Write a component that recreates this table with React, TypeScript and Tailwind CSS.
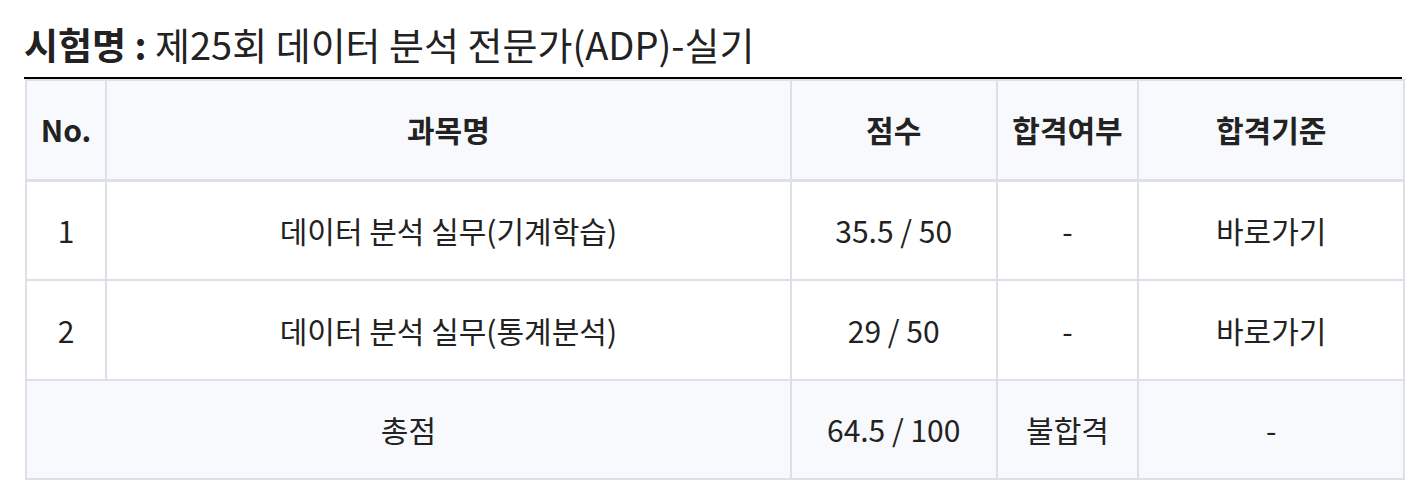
import React from 'react';

const rows = [
  { no: '1', name: '데이터 분석 실무(기계학습)', score: '35.5 / 50', pass: '-', link: '바로가기' },
  { no: '2', name: '데이터 분석 실무(통계분석)', score: '29 / 50', pass: '-', link: '바로가기' },
];

const ExamResult: React.FC = () => {
  return (
    <div className="min-h-screen bg-white pl-[24px] pr-[20px] pt-[19px] text-[#222]" style={{ fontFamily: '"Noto Sans CJK KR", "Noto Sans", sans-serif' }}>
      <h2 className="text-[38px] leading-[50px] pb-[8px] border-b-2 border-black">
        <span className="font-bold text-[37px]">시험명 :</span> 제25회 데이터 분석 전문가(ADP)-실기
      </h2>
      <table className="w-[1380px] border-collapse text-center text-[30px] ml-[1px]">
        <colgroup>
          <col className="w-[80px]" />
          <col className="w-[686px]" />
          <col className="w-[206px]" />
          <col className="w-[142px]" />
          <col className="w-[266px]" />
        </colgroup>
        <thead>
          <tr className="bg-[#f8f9fd] h-[100px] border-b-[3px] border-[#dde1e7]">
            <th className="border-2 border-[#dde1e7] font-bold">No.</th>
            <th className="border-2 border-[#dde1e7] font-bold">과목명</th>
            <th className="border-2 border-[#dde1e7] font-bold">점수</th>
            <th className="border-2 border-[#dde1e7] font-bold">합격여부</th>
            <th className="border-2 border-[#dde1e7] font-bold">합격기준</th>
          </tr>
        </thead>
        <tbody>
          {rows.map((r) => (
            <tr key={r.no} className="h-[100px]">
              <td className="border-2 border-[#dde1e7]">{r.no}</td>
              <td className="border-2 border-[#dde1e7]">{r.name}</td>
              <td className="border-2 border-[#dde1e7]">{r.score}</td>
              <td className="border-2 border-[#dde1e7]">{r.pass}</td>
              <td className="border-2 border-[#dde1e7]">{r.link}</td>
            </tr>
          ))}
          <tr className="h-[99px] bg-[#f8f9fd]">
            <td colSpan={2} className="border-2 border-[#dde1e7]">총점</td>
            <td className="border-2 border-[#dde1e7]">64.5 / 100</td>
            <td className="border-2 border-[#dde1e7]">불합격</td>
            <td className="border-2 border-[#dde1e7]">-</td>
          </tr>
        </tbody>
      </table>
    </div>
  );
};

export default ExamResult;
